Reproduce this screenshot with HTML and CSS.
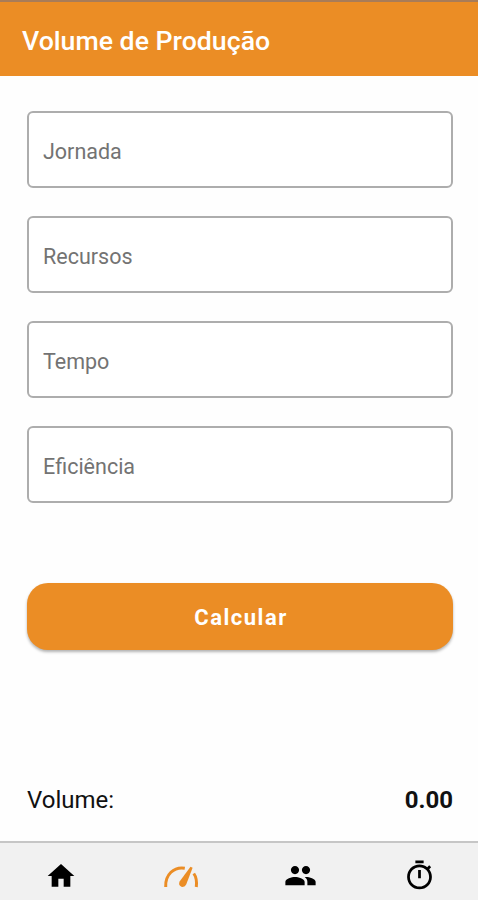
FILE: index.html
```
<!DOCTYPE html>
<html lang="pt-BR">
  <head>
    <meta charset="UTF-8" />
    <meta name="viewport" content="width=device-width, initial-scale=1.0" />
    <title>Volume de Produção</title>
    <link rel="stylesheet" href="styles.css">
  </head>
  <body>
    <header>
      <h1>Volume de Produção</h1>
    </header>
    <main>
      <form id="form">
        <input type="text" name="jornada" placeholder="Jornada" />
        <input type="text" name="recursos" placeholder="Recursos" />
        <input type="text" name="tempo" placeholder="Tempo" />
        <input type="text" name="eficiencia" placeholder="Eficiência" />
        <button type="button">Calcular</button>
      </form>
      <div class="result">
        <span class="result-label">Volume:</span>
        <span class="result-value">0.00</span>
      </div>
    </main>
    <nav>
      <a title="Início">
        <svg width="32" height="32" viewBox="0 0 24 24">
          <path d="M10 20v-6h4v6h5v-8h3L12 3 2 12h3v8z" />
        </svg>
      </a>
      <a class="active" title="Volume">
        <svg class="gauge" width="36" height="24" viewBox="0 0 36 24">
          <path class="arc" d="M2.700 23C2 10.500 11 2.500 21.800 4.200" />
          <path class="arc" d="M30.800 9.500Q34.300 14.500 33.300 23" />
          <path d="M27.500 2.800L29.600 3.800L23.300 20.300Q21.800 23.600 18.400 22.800Q15 21.300 16.600 17.600Z" />
        </svg>
      </a>
      <a title="Recursos">
        <svg width="33" height="33" viewBox="0 0 24 24">
          <path d="M16 11c1.660 0 2.990-1.340 2.990-3S17.660 5 16 5s-3 1.340-3 3 1.340 3 3 3zm-8 0c1.660 0 2.990-1.340 2.990-3S9.660 5 8 5 5 6.340 5 8s1.340 3 3 3zm0 2c-2.330 0-7 1.170-7 3.500V19h14v-2.500c0-2.330-4.670-3.500-7-3.500zm8 0c-.29 0-.62.02-.97.05 1.160.84 1.970 1.970 1.970 3.450V19h6v-2.500c0-2.330-4.670-3.500-7-3.500z" />
        </svg>
      </a>
      <a title="Tempo">
        <svg width="33" height="33" viewBox="0 0 24 24">
          <path d="M15 1H9v2h6V1zm-4 13h2V8h-2v6zm8.030-6.610l1.420-1.420c-.43-.51-.9-.99-1.410-1.410l-1.420 1.420C16.070 4.740 14.120 4 12 4c-4.970 0-9 4.030-9 9s4.020 9 9 9 9-4.030 9-9c0-2.120-.74-4.070-1.970-5.610zM12 20c-3.870 0-7-3.130-7-7s3.130-7 7-7 7 3.130 7 7-3.130 7-7 7z" />
        </svg>
      </a>
    </nav>
  </body>
</html>
```
FILE: styles.css
```
* {
  box-sizing: border-box;
}
body {
  margin: 0;
  height: 100vh;
  display: flex;
  flex-direction: column;
  font-family: Roboto, Arial, sans-serif;
  background-color: #fefefe;
}
header {
  height: 76px;
  padding: 3px 22px 0;
  display: flex;
  align-items: center;
  background-color: #eb8d25;
  border-top: 2px solid #a87c58;
}
h1 {
  margin: 0;
  font-size: 26.7px;
  font-weight: 500;
  color: #fff;
}
main {
  flex: 1;
  padding: 35px 25px 0 27px;
}
#form {
  display: flex;
  flex-direction: column;
  gap: 28px;
}
input {
  width: 100%;
  height: 77px;
  padding: 3px 14px 0;
  border: 2px solid #adadad;
  border-radius: 6px;
  outline: none;
  background-color: #fff;
  font-family: inherit;
  font-size: 21.5px;
}
::placeholder {
  color: #737373;
}
button {
  height: 67px;
  margin-top: 52px;
  padding: 1px 5px 0 7px;
  border: none;
  border-radius: 21px;
  background-color: #eb8d25;
  box-shadow: 0 2px 3px rgba(0, 0, 0, 0.3);
  color: #fff;
  font-family: inherit;
  font-size: 22px;
  font-weight: 700;
  letter-spacing: 1.5px;
  cursor: pointer;
}
.result {
  margin-top: 136px;
  display: flex;
  justify-content: space-between;
  font-size: 24px;
  line-height: 28px;
  color: #111;
}
.result-value {
  font-weight: 700;
}
nav {
  height: 59px;
  padding: 8px 0 0 1px;
  display: flex;
  background-color: #f1f1f1;
  border-top: 2px solid #c6c6c6;
}
nav a {
  flex: 0 0 119.7px;
  display: flex;
  align-items: center;
  justify-content: center;
}
nav .active {
  color: #eb8d25;
}
svg {
  fill: currentColor;
}
.arc {
  fill: none;
  stroke: currentColor;
  stroke-width: 3;
}
```
